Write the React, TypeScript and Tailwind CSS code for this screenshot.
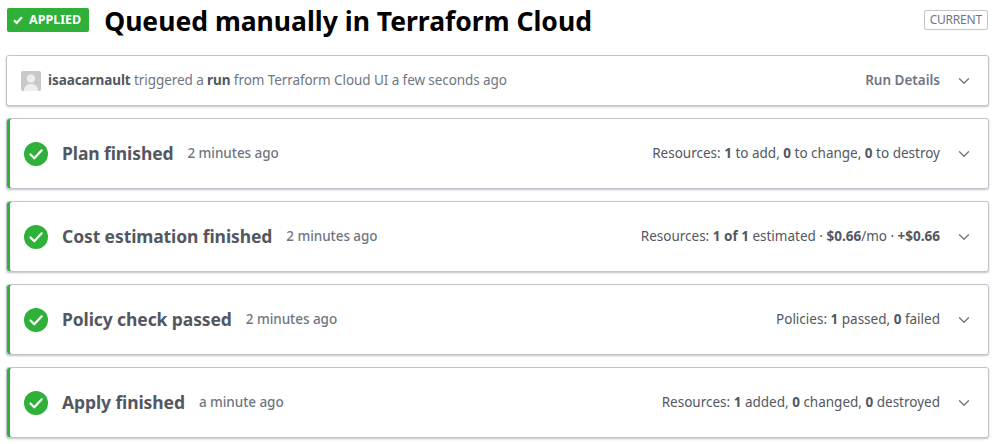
import { ChevronDown } from 'lucide-react';
import type { ReactNode } from 'react';

const font = { fontFamily: '"Noto Sans", sans-serif' };

function Chevron() {
  return <ChevronDown className="ml-[15px] h-[18px] w-[18px] text-[#6f7682]" strokeWidth={1.75} />;
}

function CheckCircle() {
  return (
    <svg viewBox="0 0 24 24" className="h-6 w-6 shrink-0">
      <circle cx="12" cy="12" r="12" fill="#2eb039" />
      <path d="M6.5 12.5l3.8 3.8 7.4-8" fill="none" stroke="#fff" strokeWidth="2.2" strokeLinecap="round" strokeLinejoin="round" />
    </svg>
  );
}

function Avatar() {
  return (
    <svg viewBox="0 0 20 20" className="h-5 w-5 shrink-0 rounded-[2px]">
      <rect width="20" height="20" fill="#c9c9c9" />
      <circle cx="10" cy="7.5" r="4.2" fill="#eeeeee" />
      <path d="M3 20c0-5 3-7 7-7s7 2 7 7z" fill="#eeeeee" />
    </svg>
  );
}

function Step({ title, time, children }: { title: string; time: string; children: ReactNode }) {
  return (
    <div className="flex h-[71px] items-center rounded-[3px] border border-[#c2c5cb] bg-white pl-[17px] pr-[15px] shadow-[inset_3px_0_0_#2eb039,0_1px_2px_rgba(111,118,130,0.45)]">
      <CheckCircle />
      <span className="ml-[14px] text-[17.5px] font-bold tracking-[-0.1px] text-[#525761]">{title}</span>
      <span className="ml-[14px] text-[13.5px] font-medium tracking-[-0.05px] text-[#6f7682]">{time}</span>
      <div className="ml-auto flex items-center text-[13.5px] text-[#525761] [&_b]:font-bold">
        {children}
        <Chevron />
      </div>
    </div>
  );
}

export default function App() {
  return (
    <div className="h-[444px] w-[995px] overflow-hidden bg-white px-[6px]" style={font}>
      <header className="flex h-[55px] items-start pt-2">
        <span className="ml-px flex h-6 items-center rounded-[2px] bg-[#2eb039] pl-[6px] pr-[8px] text-[12.5px] font-bold text-white">
          <svg viewBox="0 0 12 12" className="mr-[6px] h-[10px] w-[10px]">
            <path d="M1.2 6.2l3.2 3.2 6.3-6.8" fill="none" stroke="#fff" strokeWidth="2.6" />
          </svg>
          APPLIED
        </span>
        <h1 className="-mt-[4px] ml-[15px] text-[26.5px] font-bold leading-[34px] text-black">
          Queued manually in Terraform Cloud
        </h1>
        <span className="ml-auto mt-[2px] mr-px flex h-5 items-center rounded-[2px] border border-[#c2c5cb] px-[5px] text-[12px] tracking-[-0.2px] text-[#6f7682]">
          CURRENT
        </span>
      </header>
      <div className="flex h-[51px] items-center rounded-[3px] border border-[#c2c5cb] bg-white pl-[14px] pr-[15px] text-[13.5px] text-[#6f7682] shadow-[0_1px_2px_rgba(111,118,130,0.45)]">
        <Avatar />
        <span className="ml-[7px] tracking-[-0.08px]">
          <b className="font-bold text-[#525761]">isaacarnault</b> triggered a <b className="font-bold text-[#525761]">run</b> from Terraform Cloud UI a few seconds ago
        </span>
        <div className="ml-auto flex items-center">
          <span className="font-semibold">Run Details</span>
          <Chevron />
        </div>
      </div>
      <div className="mt-[12px] flex flex-col gap-[12px]">
        <Step title="Plan finished" time="2 minutes ago">
          <span>Resources: <b>1</b> to add, <b>0</b> to change, <b>0</b> to destroy</span>
        </Step>
        <Step title="Cost estimation finished" time="2 minutes ago">
          <span>Resources: <b>1 of 1</b> estimated · <b>$0.66</b>/mo · <b>+$0.66</b></span>
        </Step>
        <Step title="Policy check passed" time="2 minutes ago">
          <span>Policies: <b>1</b> passed, <b>0</b> failed</span>
        </Step>
        <Step title="Apply finished" time="a minute ago">
          <span>Resources: <b>1</b> added, <b>0</b> changed, <b>0</b> destroyed</span>
        </Step>
      </div>
    </div>
  );
}
